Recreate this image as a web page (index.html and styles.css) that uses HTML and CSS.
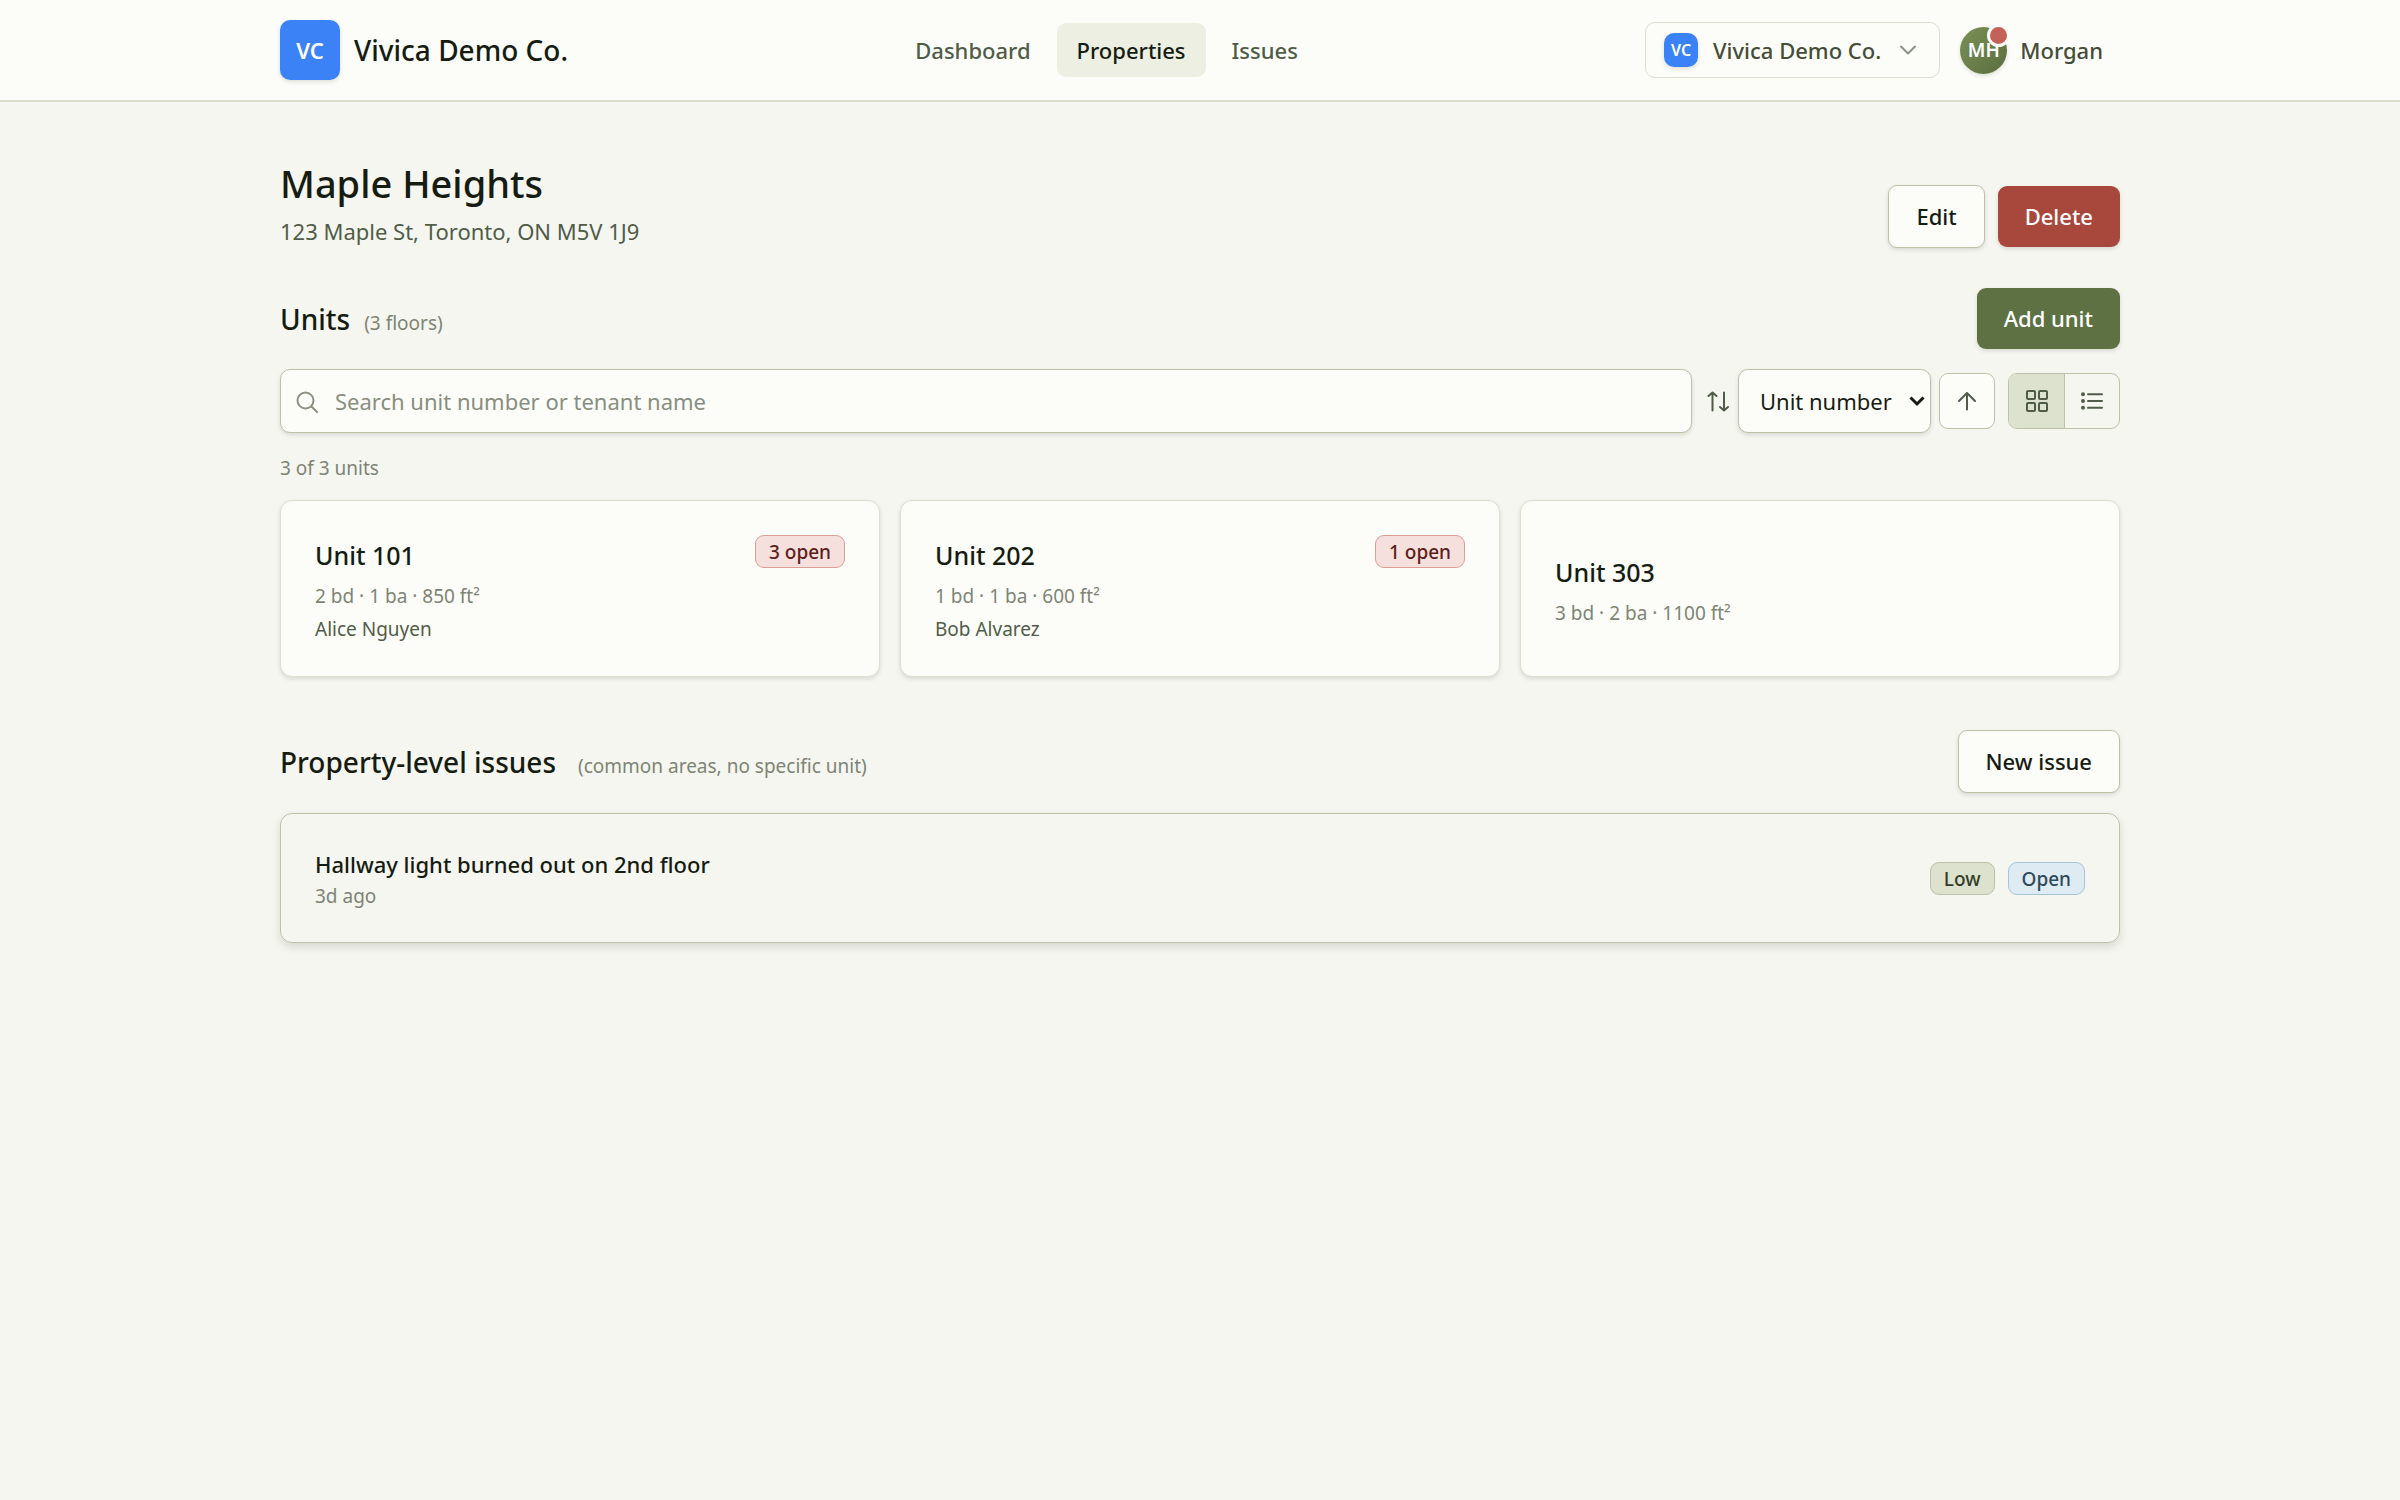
FILE: index.html
```html
<!DOCTYPE html>
<html lang="en">
<head>
    <meta charset="UTF-8">
    <meta name="viewport" content="width=device-width, initial-scale=1.0">
    <title>Maple Heights - Vivica Demo Co.</title>
    <link rel="stylesheet" href="styles.css">
</head>
<body>
    <header class="topbar">
        <div class="topbar-inner">
            <a class="brand" href="#">
                <span class="logo">VC</span>
                <span>Vivica Demo Co.</span>
            </a>

            <nav class="nav" aria-label="Main">
                <a class="nav-link" href="#">Dashboard</a>
                <a class="nav-link active" href="#" aria-current="page">Properties</a>
                <a class="nav-link" href="#">Issues</a>
            </nav>

            <div class="account">
                <button class="org-switcher" type="button">
                    <span class="logo logo-small">VC</span>
                    <span>Vivica Demo Co.</span>
                    <svg class="icon icon-soft" viewBox="0 0 24 24" aria-hidden="true">
                        <path d="M5 8.500l7 7 7-7"/>
                    </svg>
                </button>
                <button class="user" type="button">
                    <span class="avatar">MH<span class="avatar-dot"></span></span>
                    <span>Morgan</span>
                </button>
            </div>
        </div>
    </header>

    <main class="page">
        <div class="page-head">
            <div>
                <h1>Maple Heights</h1>
                <p class="address">123 Maple St, Toronto, ON M5V 1J9</p>
            </div>
            <div class="actions">
                <button class="button button-outline" type="button">Edit</button>
                <button class="button button-danger" type="button">Delete</button>
            </div>
        </div>

        <section class="units">
            <div class="section-head">
                <div class="section-title">
                    <h2>Units</h2>
                    <span class="note">(3 floors)</span>
                </div>
                <button class="button button-primary" type="button">Add unit</button>
            </div>

            <div class="toolbar">
                <div class="search">
                    <svg class="icon icon-soft search-icon" viewBox="0 0 24 24" aria-hidden="true">
                        <circle cx="10.5" cy="11.5" r="8"/>
                        <path d="M16.500 17.500l5.500 5.500"/>
                    </svg>
                    <input class="field search-input" type="search" placeholder="Search unit number or tenant name" aria-label="Search units">
                </div>
                <label class="sort-label" for="sort" aria-label="Sort by">
                    <svg class="icon" viewBox="0 0 24 24" aria-hidden="true">
                        <path d="M6.500 21.500V3.500M2.500 7l4-3.500 4 3.500M18 3.500v18M14 18l4 3.500 4-3.500"/>
                    </svg>
                </label>
                <div class="select-wrap">
                    <select class="field select" id="sort">
                        <option>Unit number</option>
                        <option>Open issues</option>
                        <option>Tenant name</option>
                    </select>
                    <svg class="select-arrow" viewBox="0 0 16 12" aria-hidden="true">
                        <path d="M1.500 2.500L8 9l6.500-6.500"/>
                    </svg>
                </div>
                <button class="icon-button" type="button" aria-label="Sort ascending">
                    <svg class="icon" viewBox="0 0 24 24" aria-hidden="true">
                        <path d="M12 20.500V4M4 12l8-8 8 8"/>
                    </svg>
                </button>
                <div class="view-toggle" role="group" aria-label="View">
                    <button class="view-button active" type="button" aria-label="Grid view" aria-pressed="true">
                        <svg class="icon" viewBox="0 0 24 24" aria-hidden="true">
                            <rect x="2" y="2" width="8" height="8" rx="1"/>
                            <rect x="14" y="2" width="8" height="8" rx="1"/>
                            <rect x="2" y="14" width="8" height="8" rx="1"/>
                            <rect x="14" y="14" width="8" height="8" rx="1"/>
                        </svg>
                    </button>
                    <button class="view-button" type="button" aria-label="List view" aria-pressed="false">
                        <svg class="icon" viewBox="0 0 24 24" aria-hidden="true">
                            <path d="M8 5.300h14M8 12h14M8 18.700h14"/>
                            <path class="dots" d="M3 5.300h0M3 12h0M3 18.700h0"/>
                        </svg>
                    </button>
                </div>
            </div>

            <p class="count">3 of 3 units</p>

            <div class="unit-grid">
                <a class="card unit" href="#">
                    <div>
                        <h3>Unit 101</h3>
                        <p class="meta">2 bd · 1 ba · 850 ft²</p>
                        <p class="tenant">Alice Nguyen</p>
                    </div>
                    <span class="badge badge-red">3 open</span>
                </a>
                <a class="card unit" href="#">
                    <div>
                        <h3>Unit 202</h3>
                        <p class="meta">1 bd · 1 ba · 600 ft²</p>
                        <p class="tenant">Bob Alvarez</p>
                    </div>
                    <span class="badge badge-red">1 open</span>
                </a>
                <a class="card unit" href="#">
                    <div>
                        <h3>Unit 303</h3>
                        <p class="meta">3 bd · 2 ba · 1100 ft²</p>
                    </div>
                </a>
            </div>
        </section>

        <section class="issues">
            <div class="section-head">
                <div class="section-title section-title-wide">
                    <h2>Property-level issues</h2>
                    <span class="note">(common areas, no specific unit)</span>
                </div>
                <button class="button button-outline" type="button">New issue</button>
            </div>

            <a class="card issue" href="#">
                <div>
                    <p class="issue-title">Hallway light burned out on 2nd floor</p>
                    <p class="issue-age">3d ago</p>
                </div>
                <div class="badges">
                    <span class="badge badge-green">Low</span>
                    <span class="badge badge-blue">Open</span>
                </div>
            </a>
        </section>
    </main>
</body>
</html>
```
FILE: styles.css
```css
:root {
    --bg: #f5f6f0;
    --surface: #fcfdf8;
    --border: #dcdfcf;
    --border-strong: #bdc2a6;
    --text: #161c12;
    --text-nav: #454d38;
    --text-muted: #505c48;
    --text-soft: #7e8475;
    --green: #5e7142;
    --green-soft: #dde2ce;
    --shadow: 0 2px 4px rgba(40, 50, 30, 0.14);
}

* {
    box-sizing: border-box;
}

body {
    margin: 0;
    background: var(--bg);
    color: var(--text);
    font-family: "Noto Sans", "Open Sans", sans-serif;
    font-size: 22px;
    line-height: 34px;
}

h1, h2, h3, p {
    margin: 0;
    font-weight: 500;
}

a {
    color: inherit;
    text-decoration: none;
}

button, input, select {
    font: inherit;
    color: inherit;
}

button {
    padding: 0;
    border: none;
    background: none;
    cursor: pointer;
}

.icon {
    display: block;
    width: 24px;
    height: 24px;
    fill: none;
    stroke: var(--text-muted);
    stroke-width: 2;
    stroke-linecap: round;
    stroke-linejoin: round;
}

.icon-soft {
    stroke: #8b9181;
}

.icon .dots {
    stroke-width: 4;
}

/* Header */
.topbar {
    background: var(--surface);
    border-bottom: 2px solid var(--border);
}

.topbar-inner {
    display: flex;
    align-items: center;
    justify-content: space-between;
    max-width: 1880px;
    min-height: 100px;
    margin: 0 auto;
    padding: 0 20px;
}

.brand {
    display: flex;
    align-items: center;
    gap: 14px;
    font-size: 28px;
    font-weight: 500;
}

.logo {
    display: flex;
    align-items: center;
    justify-content: center;
    width: 60px;
    height: 60px;
    border-radius: 10px;
    background: #3b82f6;
    box-shadow: var(--shadow);
    color: #fff;
    font-size: 22px;
    font-weight: 600;
}

.logo-small {
    width: 34px;
    height: 34px;
    font-size: 16px;
}

.nav {
    display: flex;
    gap: 6px;
}

.nav-link {
    padding: 10px 20px;
    border-radius: 9px;
    color: var(--text-muted);
    font-weight: 500;
}

.nav-link.active {
    background: #ecefe1;
    color: var(--text);
}

.account {
    display: flex;
    align-items: center;
    gap: 8px;
}

.org-switcher {
    display: flex;
    align-items: center;
    gap: 15px;
    height: 56px;
    padding: 0 19px 0 18px;
    border: 1px solid var(--border);
    border-radius: 10px;
    color: var(--text-nav);
    font-weight: 500;
}

.user {
    display: flex;
    align-items: center;
    gap: 13px;
    padding: 0 17px 0 12px;
    color: var(--text-nav);
    font-weight: 500;
}

.avatar {
    position: relative;
    display: flex;
    align-items: center;
    justify-content: center;
    width: 47px;
    height: 47px;
    border-radius: 50%;
    background: linear-gradient(135deg, #7b9156, #5a6d3f);
    box-shadow: var(--shadow);
    color: #fff;
    font-size: 19px;
    font-weight: 600;
}

.avatar-dot {
    position: absolute;
    top: -3px;
    right: -3px;
    width: 23px;
    height: 23px;
    border: 3px solid var(--surface);
    border-radius: 50%;
    background: #c4625a;
}

/* Page */
.page {
    max-width: 1880px;
    margin: 0 auto;
    padding: 56px 20px;
}

.page-head {
    display: flex;
    align-items: flex-end;
    justify-content: space-between;
    margin-bottom: 40px;
}

h1 {
    margin-bottom: 6px;
    font-size: 38px;
    line-height: 50px;
}

.address {
    color: var(--text-muted);
    font-weight: 400;
}

.actions {
    display: flex;
    align-items: center;
    gap: 13px;
}

.button {
    padding: 14px 27px;
    border-radius: 9px;
    box-shadow: var(--shadow);
    font-weight: 500;
    line-height: 33px;
}

.button-outline {
    border: 1px solid var(--border-strong);
    background: var(--surface);
}

.button-danger {
    background: #a8483d;
    color: #fff;
}

.button-primary {
    background: var(--green);
    color: #fff;
}

.section-head {
    display: flex;
    align-items: center;
    justify-content: space-between;
    margin-bottom: 20px;
}

.section-title {
    display: flex;
    align-items: baseline;
    gap: 14px;
    padding-top: 4px;
}

.section-title-wide {
    gap: 22px;
}

h2 {
    font-size: 28px;
    line-height: 36px;
}

.note {
    color: var(--text-soft);
    font-size: 19px;
}

/* Toolbar */
.toolbar {
    display: flex;
    align-items: center;
}

.field {
    height: 64px;
    border: 1px solid var(--border-strong);
    border-radius: 10px;
    background: var(--surface);
    box-shadow: var(--shadow);
}

.search {
    position: relative;
    flex: 1;
}

.search-icon {
    position: absolute;
    top: 20px;
    left: 15px;
}

.search-input {
    display: block;
    width: 100%;
    padding: 0 20px 0 54px;
    appearance: none;
}

.search-input::placeholder {
    color: #888e80;
    opacity: 1;
}

.sort-label {
    margin: 0 8px 0 14px;
}

.select-wrap {
    position: relative;
    margin-right: 8px;
}

.select {
    display: block;
    width: 193px;
    padding: 0 36px 0 21px;
    appearance: none;
}

.select-arrow {
    position: absolute;
    top: 26px;
    right: 6px;
    width: 16px;
    height: 12px;
    fill: none;
    stroke: var(--text);
    stroke-width: 3;
    pointer-events: none;
}

.icon-button {
    display: flex;
    align-items: center;
    justify-content: center;
    width: 56px;
    height: 56px;
    margin-right: 13px;
    border: 1px solid var(--border-strong);
    border-radius: 9px;
    background: var(--surface);
}

.view-toggle {
    display: flex;
    border: 1px solid var(--border-strong);
    border-radius: 9px;
    overflow: hidden;
}

.view-button {
    display: flex;
    align-items: center;
    justify-content: center;
    width: 55px;
    height: 54px;
}

.view-button + .view-button {
    border-left: 1px solid var(--border-strong);
}

.view-button.active {
    background: var(--green-soft);
}

.count {
    margin: 22px 0 19px;
    color: var(--text-soft);
    font-size: 19px;
    font-weight: 400;
    line-height: 26px;
}

/* Cards */
.card {
    display: flex;
    align-items: center;
    justify-content: space-between;
    padding: 32px 34px;
    border: 1px solid var(--border);
    border-radius: 12px;
}

.unit-grid {
    display: grid;
    grid-template-columns: repeat(3, 1fr);
    gap: 20px;
}

.unit {
    padding-bottom: 30px;
    background: var(--surface);
    box-shadow: var(--shadow);
}

h3 {
    margin-bottom: 3px;
    font-size: 25px;
    line-height: 44px;
}

.meta, .tenant {
    font-size: 19px;
    font-weight: 400;
    line-height: 33px;
}

.meta {
    color: var(--text-soft);
}

.tenant {
    color: var(--text-muted);
}

.unit .badge {
    align-self: flex-start;
    margin-top: 2px;
}

.badge {
    padding: 2px 13px 0;
    border: 1px solid;
    border-radius: 9px;
    font-size: 19px;
    font-weight: 500;
    line-height: 29px;
}

.badge-red {
    border-color: #dd9d97;
    background: #f6e0dd;
    color: #5c201b;
}

.badge-green {
    border-color: var(--border-strong);
    background: var(--green-soft);
    color: #343d28;
}

.badge-blue {
    border-color: #a5c5d6;
    background: #dfebf2;
    color: #2d495c;
}

.issues {
    margin-top: 53px;
}

.issue {
    border-color: var(--border-strong);
    box-shadow: 0 4px 8px rgba(40, 50, 30, 0.15);
}

.issue-title {
    line-height: 36px;
}

.issue-age {
    color: var(--text-soft);
    font-size: 19px;
    font-weight: 400;
    line-height: 28px;
}

.badges {
    display: flex;
    gap: 13px;
}
```
